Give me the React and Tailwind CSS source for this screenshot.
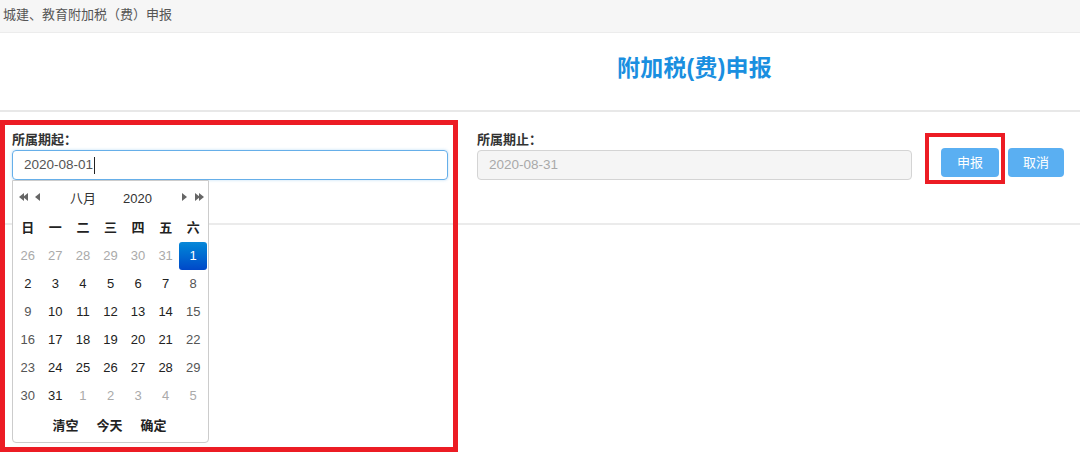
import React from 'react'

const font = { fontFamily: '"Liberation Sans", "Noto Sans CJK SC", sans-serif' }

const weekdays = ['日', '一', '二', '三', '四', '五', '六']

// 6 rows of the August 2020 month view
const days = [
  [26, 'o'], [27, 'o'], [28, 'o'], [29, 'o'], [30, 'o'], [31, 'o'], [1, 'sel'],
  [2], [3], [4], [5], [6], [7], [8, 'we'],
  [9, 'we'], [10], [11], [12], [13], [14], [15, 'we'],
  [16, 'we'], [17], [18], [19], [20], [21], [22, 'we'],
  [23, 'we'], [24], [25], [26], [27], [28], [29, 'we'],
  [30, 'we'], [31], [1, 'o'], [2, 'o'], [3, 'o'], [4, 'o'], [5, 'o'],
]

function Tri({ dir = 'left', double = false }) {
  const one = dir === 'left' ? 'M5 0 L5 8 L0 4 Z' : 'M0 0 L0 8 L5 4 Z'
  const two = dir === 'left' ? 'M9 0 L9 8 L4 4 Z' : 'M4 0 L4 8 L9 4 Z'
  return (
    <svg width={double ? 9 : 5} height="8" viewBox={`0 0 ${double ? 9 : 5} 8`} className="block">
      <path d={one} fill="#666" />
      {double && <path d={two} fill="#666" />}
    </svg>
  )
}

function Calendar() {
  return (
    <div className="absolute left-[12px] top-[180px] w-[197px] h-[263px] bg-white border border-[#ccc] rounded-b-[4px] px-[1px]">
      {/* header */}
      <div className="relative h-[33px] text-[13px] text-[#333]">
        <div className="absolute left-[5px] top-[12px] flex items-center gap-[7px]">
          <Tri dir="left" double />
          <Tri dir="left" />
        </div>
        <span className="absolute left-[56px] top-[8px]">八月</span>
        <span className="absolute left-[109px] top-[8px]">2020</span>
        <div className="absolute left-[168px] top-[12px] flex items-center gap-[8px]">
          <Tri dir="right" />
          <Tri dir="right" double />
        </div>
      </div>
      <div className="grid grid-cols-7 w-[193px]">
        {weekdays.map((w) => (
          <div key={w} className="h-[28px] flex items-center justify-center text-[13px] font-bold text-[#222]">
            {w}
          </div>
        ))}
        {days.map(([d, t], i) => (
          <div key={i} className="h-[28px] flex items-center justify-center">
            {t === 'sel' ? (
              <div className="w-[28px] h-[28px] rounded-[3px] bg-gradient-to-b from-[#0a88d8] to-[#0047c8] text-white text-[13px] flex items-center justify-center">
                {d}
              </div>
            ) : (
              <span className={`text-[13px] ${t === 'o' ? 'text-[#aaa]' : t === 'we' ? 'text-[#555]' : 'text-[#222]'}`}>{d}</span>
            )}
          </div>
        ))}
      </div>
      <div className="h-[32px] flex items-center justify-center gap-[18px] text-[13px] font-bold text-[#222] pr-[2px]">
        <span>清空</span>
        <span>今天</span>
        <span>确定</span>
      </div>
    </div>
  )
}

export default function App() {
  return (
    <div className="relative w-[1080px] h-[463px] bg-white overflow-hidden" style={font}>
      {/* breadcrumb bar */}
      <div className="h-[33px] bg-[#f6f6f6] border-b border-[#ececec] flex items-center pl-[3px] pb-[3px] text-[13px] text-[#555]">
        城建、教育附加税（费）申报
      </div>

      {/* title */}
      <div className="h-[77px] flex items-center pl-[617px] pb-[7px]">
        <h1 className="text-[23px] font-bold text-[#1a8fe0] tracking-[0.2px]">附加税(费)申报</h1>
      </div>
      <div className="h-[2px] bg-[#e8e8e8]" />

      {/* form row */}
      <div className="h-[111px] flex items-start pt-[19px]">
        <div className="ml-[12px] w-[436px]">
          <div className="text-[13px] font-bold text-[#333] leading-[18px] mb-[1px]">所属期起：</div>
          <div className="h-[30px] border border-[#66afe9] rounded-[4px] flex items-center pl-[11px] text-[13.5px] text-[#555] shadow-[0_0_3px_rgba(102,175,233,0.45)]">
            2020-08-01
            <span className="inline-block w-[1px] h-[17px] bg-[#222] ml-[1px]" />
          </div>
        </div>
        <div className="ml-[29px] w-[435px]">
          <div className="text-[13px] font-bold text-[#333] leading-[18px] mb-[1px]">所属期止：</div>
          <div className="h-[30px] bg-[#f5f5f5] border border-[#d4d4d4] rounded-[4px] flex items-center pl-[11px] text-[13.5px] text-[#a9a9a9]">
            2020-08-31
          </div>
        </div>
        <div className="ml-[29px] mt-[17px] flex gap-[9px]">
          <button className="w-[58px] h-[29px] rounded-[4px] bg-[#5aaff2] text-white text-[13px]">申报</button>
          <button className="w-[56px] h-[29px] rounded-[4px] bg-[#5aaff2] text-white text-[13px]">取消</button>
        </div>
      </div>
      <div className="h-[2px] bg-[#ebebeb]" />

      <Calendar />

      {/* red annotation boxes */}
      <div className="absolute left-0 top-[120px] w-[458px] h-[332px] border-[5px] border-[#ec1c24] pointer-events-none" />
      <div className="absolute left-[925px] top-[133px] w-[80px] h-[51px] border-[4px] border-[#ec1c24] pointer-events-none" />
    </div>
  )
}
